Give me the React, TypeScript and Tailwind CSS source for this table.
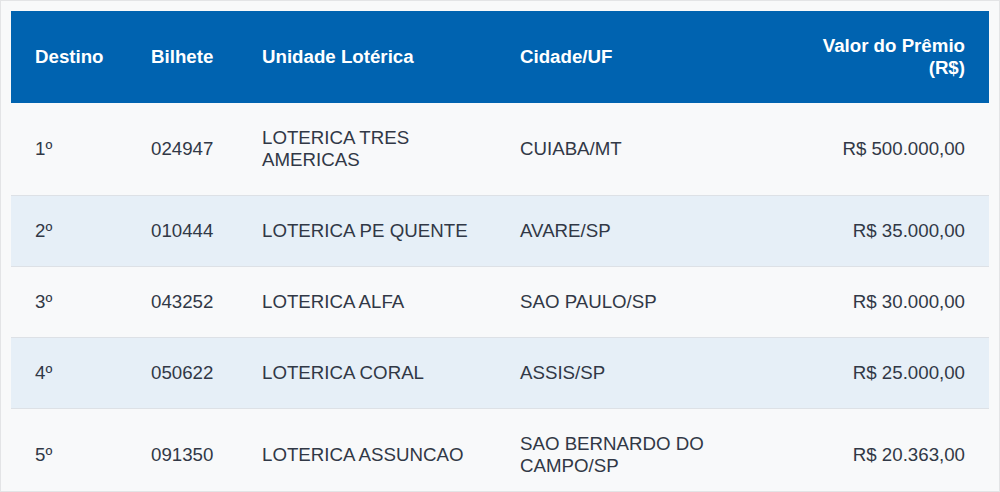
const rows = [
  { pos: '1º', ticket: '024947', unit: 'LOTERICA TRES AMERICAS', city: 'CUIABA/MT', value: 'R$ 500.000,00' },
  { pos: '2º', ticket: '010444', unit: 'LOTERICA PE QUENTE', city: 'AVARE/SP', value: 'R$ 35.000,00' },
  { pos: '3º', ticket: '043252', unit: 'LOTERICA ALFA', city: 'SAO PAULO/SP', value: 'R$ 30.000,00' },
  { pos: '4º', ticket: '050622', unit: 'LOTERICA CORAL', city: 'ASSIS/SP', value: 'R$ 25.000,00' },
  { pos: '5º', ticket: '091350', unit: 'LOTERICA ASSUNCAO', city: 'SAO BERNARDO DO CAMPO/SP', value: 'R$ 20.363,00' },
];

export default function App() {
  return (
    <div className="h-[492px] overflow-hidden border border-[#e3e4e6] bg-[#f8f9fa] p-[10px] font-['Liberation_Sans',Arial,sans-serif] text-[18.7px] leading-[22px] text-[#313846]">
      <table className="w-full table-fixed border-collapse">
        <colgroup>
          <col className="w-[116px]" />
          <col className="w-[111px]" />
          <col className="w-[258px]" />
          <col className="w-[270px]" />
          <col />
        </colgroup>
        <thead>
          <tr className="bg-[#0063b0] text-white">
            <th className="px-6 py-[24px] text-left font-bold">Destino</th>
            <th className="px-6 py-[24px] text-left font-bold">Bilhete</th>
            <th className="px-6 py-[24px] text-left font-bold">Unidade Lotérica</th>
            <th className="px-6 py-[24px] text-left font-bold">Cidade/UF</th>
            <th className="px-6 py-[24px] text-right font-bold">Valor do Prêmio (R$)</th>
          </tr>
        </thead>
        <tbody>
          {rows.map((r, i) => (
            <tr
              key={r.ticket}
              className={`${i % 2 === 1 ? 'bg-[#e6eff7]' : 'bg-[#f8f9fa]'} ${i > 0 ? 'border-t border-[#dde1e6]' : ''}`}
            >
              <td className="px-6 py-6 align-middle">{r.pos}</td>
              <td className="px-6 py-6 align-middle">{r.ticket}</td>
              <td className="px-6 py-6 align-middle">{r.unit}</td>
              <td className="px-6 py-6 align-middle">{r.city}</td>
              <td className="px-6 py-6 text-right align-middle">{r.value}</td>
            </tr>
          ))}
        </tbody>
      </table>
    </div>
  );
}
